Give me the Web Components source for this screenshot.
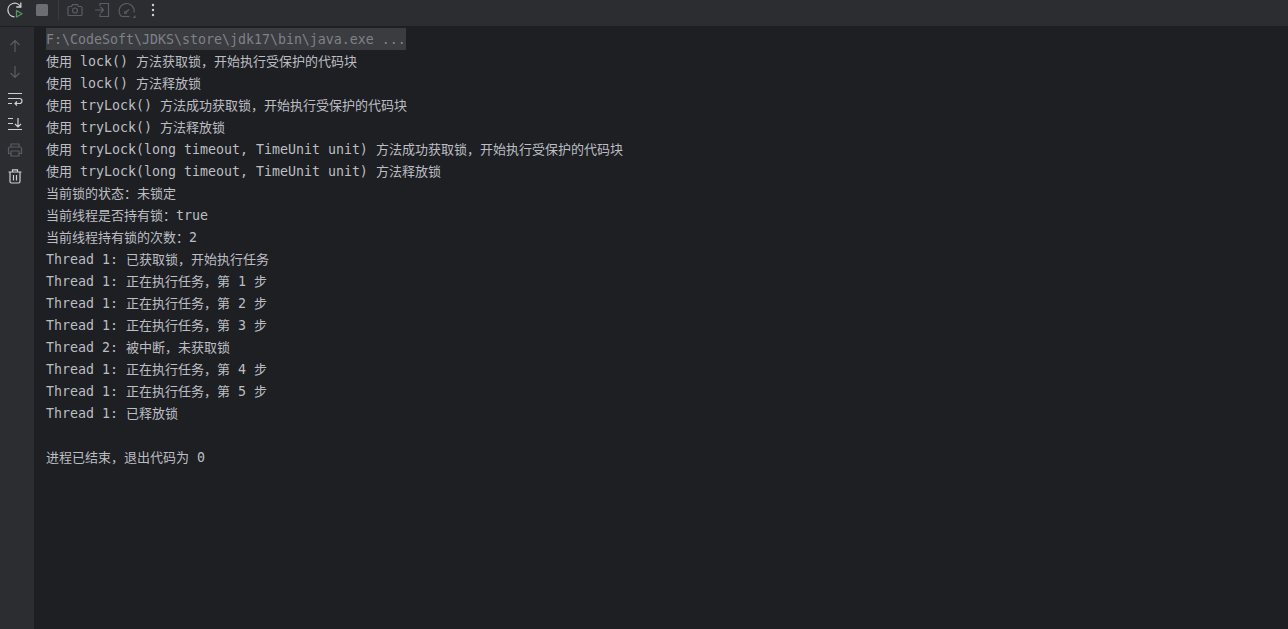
<!DOCTYPE html>
<html>
<head>
<meta charset="utf-8">
<style>
  html, body { margin: 0; height: 100%; background: #1e1f22; }
  body { overflow: hidden; }
</style>
</head>
<body>
<run-console>
  <tool-button slot="top"><svg width="20" height="20" viewBox="0 0 20 20" fill="none"><path d="M15.800 7A6.800 6.800 0 1 0 9.500 16.800" stroke="#ced0d6" stroke-width="1.300"/><path d="M15.800 2.500v4.500h-4.500" stroke="#ced0d6" stroke-width="1.300"/><path d="M11.500 10.500v6.500l5.500-3.200z" stroke="#57965c" stroke-width="1.300" stroke-linejoin="round"/></svg></tool-button>
  <tool-button slot="top"><svg width="20" height="20" viewBox="0 0 20 20"><rect x="4" y="4" width="12" height="12" rx="1.500" fill="#6b6d72"/></svg></tool-button>
  <tool-sep slot="top"></tool-sep>
  <tool-button slot="top"><svg width="20" height="20" viewBox="0 0 20 20" fill="none" stroke="#5a5d63" stroke-width="1.200"><path d="M4 6.500h2.500l1-1.800h5l1 1.800H16a1 1 0 0 1 1 1v7a1 1 0 0 1-1 1H4a1 1 0 0 1-1-1v-7a1 1 0 0 1 1-1z"/><circle cx="10" cy="10.500" r="2.500"/></svg></tool-button>
  <tool-button slot="top"><svg width="20" height="20" viewBox="0 0 20 20" fill="none" stroke="#5a5d63" stroke-width="1.200"><path d="M8 6V3.500h8.500v13H8V14"/><path d="M3 10h8.500M8.500 7l3 3-3 3"/></svg></tool-button>
  <tool-button slot="top" style="margin-left:-2px"><svg width="20" height="20" viewBox="0 0 20 20" fill="none" stroke="#5a5d63" stroke-width="1.200"><path d="M4.500 16.500A7.500 7.500 0 1 1 17 12.500"/><path d="M4.500 16.500h8"/><path d="M9 12l3-2.500"/><circle cx="8.500" cy="12.500" r="1"/><path d="M15.500 18l3-3v3z" fill="#5a5d63" stroke="none"/></svg></tool-button>
  <tool-button slot="top" style="margin-left:-1px"><svg width="20" height="20" viewBox="0 0 20 20" fill="#ced0d6"><circle cx="10" cy="5" r="1.200"/><circle cx="10" cy="10" r="1.200"/><circle cx="10" cy="15" r="1.200"/></svg></tool-button>

  <tool-button slot="side"><svg width="20" height="20" viewBox="0 0 20 20" fill="none" stroke="#5a5d63" stroke-width="1.200"><path d="M10 16V4.500M5.500 9L10 4.500 14.500 9"/></svg></tool-button>
  <tool-button slot="side"><svg width="20" height="20" viewBox="0 0 20 20" fill="none" stroke="#5a5d63" stroke-width="1.200"><path d="M10 4v11.500M5.500 11L10 15.500 14.500 11"/></svg></tool-button>
  <tool-button slot="side"><svg width="20" height="20" viewBox="0 0 20 20" fill="none" stroke="#ced0d6" stroke-width="1.200"><path d="M3 5.500h14M3 10.500h11.500a2.500 2.500 0 0 1 0 5H10M12 13.500l-2 2 2 2M3 15.500h4"/></svg></tool-button>
  <tool-button slot="side"><svg width="20" height="20" viewBox="0 0 20 20" fill="none" stroke="#ced0d6" stroke-width="1.200"><path d="M3 4.500h5M3 9.500h5M3 15.500h14M13 4v9M10 10l3 3 3-3"/></svg></tool-button>
  <tool-button slot="side"><svg width="20" height="20" viewBox="0 0 20 20" fill="none" stroke="#5a5d63" stroke-width="1.200"><path d="M6 7V4h8v3M6 13.500H3.500V8.500A1.500 1.500 0 0 1 5 7h10a1.500 1.500 0 0 1 1.500 1.500v5H14"/><path d="M6 11h8v5H6z"/></svg></tool-button>
  <tool-button slot="side"><svg width="20" height="20" viewBox="0 0 20 20" fill="none" stroke="#ced0d6" stroke-width="1.200"><path d="M3.500 6h13M7.500 6V3.800h5V6M5 6v9.500A1.500 1.500 0 0 0 6.500 17h7a1.500 1.500 0 0 0 1.500-1.500V6M8.500 9v5.500M11.500 9v5.500"/></svg></tool-button>

  <log-line cmd>F:\CodeSoft\JDKS\store\jdk17\bin\java.exe ...</log-line>
  <log-line>使用 lock() 方法获取锁，开始执行受保护的代码块</log-line>
  <log-line>使用 lock() 方法释放锁</log-line>
  <log-line>使用 tryLock() 方法成功获取锁，开始执行受保护的代码块</log-line>
  <log-line>使用 tryLock() 方法释放锁</log-line>
  <log-line>使用 tryLock(long timeout, TimeUnit unit) 方法成功获取锁，开始执行受保护的代码块</log-line>
  <log-line>使用 tryLock(long timeout, TimeUnit unit) 方法释放锁</log-line>
  <log-line>当前锁的状态：未锁定</log-line>
  <log-line>当前线程是否持有锁：true</log-line>
  <log-line>当前线程持有锁的次数：2</log-line>
  <log-line>Thread 1: 已获取锁，开始执行任务</log-line>
  <log-line>Thread 1: 正在执行任务，第 1 步</log-line>
  <log-line>Thread 1: 正在执行任务，第 2 步</log-line>
  <log-line>Thread 1: 正在执行任务，第 3 步</log-line>
  <log-line>Thread 2: 被中断，未获取锁</log-line>
  <log-line>Thread 1: 正在执行任务，第 4 步</log-line>
  <log-line>Thread 1: 正在执行任务，第 5 步</log-line>
  <log-line>Thread 1: 已释放锁</log-line>
  <log-line></log-line>
  <log-line>进程已结束，退出代码为 0</log-line>
</run-console>

<script>
class ToolButton extends HTMLElement {
  constructor() {
    super();
    this.attachShadow({ mode: 'open' });
    this.shadowRoot.innerHTML = `
      <style>
        :host { display: flex; align-items: center; justify-content: center; width: 20px; height: 20px; flex: none; }
        ::slotted(svg) { display: block; }
      </style>
      <slot></slot>`;
  }
}
customElements.define('tool-button', ToolButton);

class ToolSep extends HTMLElement {
  constructor() {
    super();
    this.attachShadow({ mode: 'open' });
    this.shadowRoot.innerHTML = `
      <style>:host { display: block; width: 1px; height: 20px; margin: 0 -1px; background: #393b40; flex: none; }</style>`;
  }
}
customElements.define('tool-sep', ToolSep);

class LogLine extends HTMLElement {
  constructor() {
    super();
    this.attachShadow({ mode: 'open' });
  }
  connectedCallback() {
    // latin runs and cjk runs need different sizes to land on the 8px / 13px grid
    const runs = this.textContent.split(/([\u3000-\u9fff\uff00-\uffef]+)/);
    const html = runs.map((r, i) => i % 2 ? `<span class="cjk">${r}</span>` : r).join('');
    this.shadowRoot.innerHTML = `
      <style>
        :host { display: block; height: 22px; color: #bcbec4;
                font: 13.29px/22px "DejaVu Sans Mono", monospace; }
        .cjk, .text::before { font: 13px/22px "Noto Sans CJK SC", sans-serif; }
        /* zero width cjk strut, keeps the baseline the same on latin only lines */
        .text::before { content: "\\200b"; }
        .text { display: inline-block; height: 22px; white-space: pre; vertical-align: top; }
        :host([cmd]) .text { background: #3a3c40; color: #7f8288; }
      </style>
      <span class="text">${html}</span>`;
  }
}
customElements.define('log-line', LogLine);

class RunConsole extends HTMLElement {
  constructor() {
    super();
    this.attachShadow({ mode: 'open' });
    this.shadowRoot.innerHTML = `
      <style>
        :host { display: grid; grid-template: 27px 1fr / 34px 1fr; height: 629px; background: #1e1f22; }
        .top { grid-column: 1 / 3; display: flex; align-items: flex-start; gap: 7px; padding: 0 0 0 5px;
               background: #2b2d30; border-bottom: 1px solid #1e1f22; box-sizing: border-box; }
        .side { display: flex; flex-direction: column; align-items: center; gap: 6px; padding: 9px 4px 0 0;
                background: #2b2d30; }
        .log { padding: 1px 0 0 12px; }
      </style>
      <div class="top"><slot name="top"></slot></div>
      <div class="side"><slot name="side"></slot></div>
      <div class="log"><slot></slot></div>`;
  }
}
customElements.define('run-console', RunConsole);
</script>
</body>
</html>
